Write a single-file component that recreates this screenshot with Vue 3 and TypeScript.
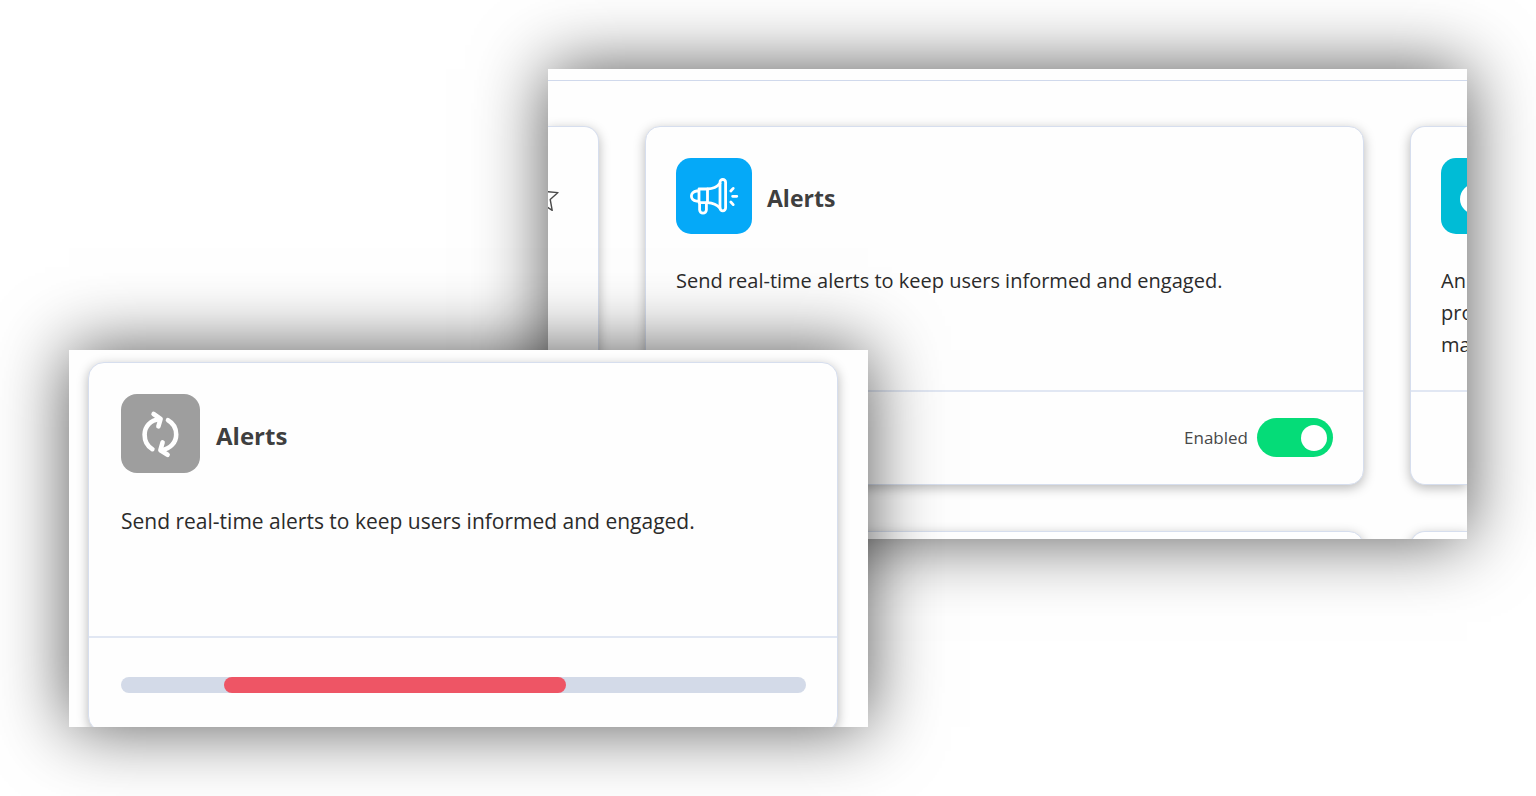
<script setup lang="ts">
import { ref } from 'vue'

interface Progress {
  start: number
  length: number
}

const enabled = ref(true)
const progress: Progress = { start: 15, length: 50 }
const description = 'Send real-time alerts to keep users informed and engaged.'
const neighbourLines: string[] = ['An', 'pro', 'ma']
</script>

<template>
  <main class="stage">
    <section class="panel panel-back" aria-label="Modules">
      <div class="rule"></div>
      <div class="row">
        <article class="card cut-left">
          <div class="body">
            <svg class="star" viewBox="0 0 11 24" fill="none" stroke="#4a4a4a" stroke-width="1.4" stroke-linejoin="round">
              <path d="M-8 3.5 L-3 3.5 L0 3.8 L10 4.6 L2.2 11.5 L4.2 22.4 L-4 17" />
            </svg>
          </div>
          <div class="foot"></div>
        </article>

        <article class="card">
          <div class="body">
            <header class="head">
              <span class="tile blue">
                <svg viewBox="0 0 76 76" fill="none" stroke="#fff" stroke-width="2.8" stroke-linecap="round" stroke-linejoin="round">
                  <path d="M22.6 33 H20.6 C17.4 33.4 15.4 35.6 15.4 38 C15.4 40.4 17.4 42.6 20.6 43.2 H22.6" />
                  <path d="M23 31 H31.5 V44.6 H23 Z" />
                  <path d="M31.5 31 C37 30.8 41 29 44 25.4 M31.5 44.6 C37 44.8 41 46.6 44 50.2" />
                  <rect x="44" y="21.5" width="5.6" height="31.4" rx="2.8" />
                  <path d="M23.6 45 V51.8 A3.4 3.4 0 0 0 30.4 51.8 V45" />
                  <path d="M54.8 33 L57.2 30.4 M56.6 38.3 H60.8 M54.8 44 L57.2 46.6" />
                </svg>
              </span>
              <h2 class="title">Alerts</h2>
            </header>
            <p class="text">{{ description }}</p>
          </div>
          <div class="foot foot-end">
            <label class="switch-label" for="alerts-enabled">Enabled</label>
            <input id="alerts-enabled" v-model="enabled" class="switch" type="checkbox" role="switch" />
          </div>
        </article>

        <article class="card cut-right">
          <div class="body">
            <header class="head">
              <span class="tile cyan"><span class="dot"></span></span>
            </header>
            <p class="text">
              <span v-for="line in neighbourLines" :key="line" class="line">{{ line }}</span>
            </p>
          </div>
          <div class="foot"></div>
        </article>

        <article class="card cut-left"></article>
        <article class="card"></article>
        <article class="card cut-right"></article>
      </div>
    </section>

    <section class="panel panel-front" aria-label="Alerts module">
      <article class="card large">
        <div class="body">
          <header class="head">
            <span class="tile gray">
              <svg viewBox="0 0 79 79" fill="none" stroke="#fff" stroke-width="4.6" stroke-linecap="round" stroke-linejoin="round">
                <path d="M31.4 55.2 C26.4 52.4 23.6 46.6 23.6 40.6 C23.6 32.6 29.4 26 38.4 25.2" />
                <path d="M32.6 20 L39.6 24.8 L37.4 32.4" />
                <path d="M47 26.2 C52 29 55.2 34.4 55.2 40.4 C55.2 48.4 49.4 54.8 40.6 56" />
                <path d="M41.6 48.4 L39.4 56.2 L46.6 60.8" />
              </svg>
            </span>
            <h2 class="title">Alerts</h2>
          </header>
          <p class="text">{{ description }}</p>
        </div>
        <div class="foot">
          <div class="track" role="progressbar" aria-label="Alerts progress">
            <div class="bar" :style="{ marginLeft: progress.start + '%', width: progress.length + '%' }"></div>
          </div>
        </div>
      </article>
    </section>
  </main>
</template>

<style>
body {
  margin: 0;
  background: #fff;
}
</style>

<style scoped>
.stage {
  display: grid;
  grid-template-columns: 479fr 320fr 599fr;
  grid-template-rows: 281px 189px 188px;
  padding: 69px;
  overflow: hidden;
  font-family: 'Segoe UI', 'Open Sans', 'Noto Sans', sans-serif;
  color: #2b2b2b;
}

.panel {
  overflow: hidden;
  min-width: 0;
  background: #fefefe;
  box-shadow: 0 0 68px rgba(0, 0, 0, 0.66);
}

.panel-back {
  grid-column: 2 / 4;
  grid-row: 1 / 3;
}

.panel-front {
  grid-column: 1 / 3;
  grid-row: 2 / 4;
  padding: 12px 30px 0 19px;
}

.rule {
  height: 11px;
  border-bottom: 1px solid #d0d9ec;
}

.row {
  display: grid;
  grid-template-columns: 51px minmax(0, 1fr) 57px;
  grid-template-rows: 359px 359px;
  gap: 46px;
  padding-top: 45px;
}

.card {
  display: flex;
  flex-direction: column;
  box-sizing: border-box;
  min-width: 0;
  border: 1px solid #d6deee;
  border-radius: 15px;
  background: #fefefe;
  box-shadow: 0 3px 12px rgba(0, 0, 0, 0.28);
}

.cut-left {
  border-left: 0;
  border-radius: 0 15px 15px 0;
}

.cut-right {
  border-right: 0;
  border-radius: 15px 0 0 15px;
}

.body {
  box-sizing: border-box;
  flex: 0 0 263px;
  padding: 31px 30px 0;
}

.cut-left .body {
  padding-left: 0;
}

.cut-right .body {
  padding-right: 0;
}

.head {
  display: flex;
  align-items: center;
  gap: 15px;
}

.tile {
  display: flex;
  align-items: center;
  flex: none;
  overflow: hidden;
  width: 76px;
  height: 76px;
  border-radius: 15px;
}

.tile svg {
  width: 100%;
  height: 100%;
}

.blue {
  background: #05a9f8;
}

.cyan {
  background: #00bcd6;
}

.gray {
  background: #9e9e9e;
}

.dot {
  width: 38px;
  height: 30px;
  margin: 6px 0 0 19px;
  border-radius: 15px;
  background: #fff;
}

.star {
  display: block;
  width: 11px;
  height: 24px;
  margin-top: 30px;
}

.title {
  margin: 0;
  padding-top: 4px;
  font-size: 23px;
  line-height: 32px;
  font-weight: 700;
  color: #3f3f3f;
}

.text {
  margin: 31px 0 0;
  font-size: 20px;
  line-height: 32px;
  white-space: nowrap;
}

.line {
  display: block;
}

.foot {
  display: flex;
  align-items: center;
  flex: 1;
  padding: 0 30px;
  border-top: 2px solid #e1e7f3;
}

.foot-end {
  justify-content: flex-end;
  gap: 9px;
  padding-bottom: 1px;
}

.switch-label {
  font-size: 17px;
  line-height: 24px;
  color: #484848;
}

.switch {
  display: flex;
  align-items: center;
  appearance: none;
  box-sizing: border-box;
  width: 76px;
  height: 39px;
  margin: 0;
  padding: 0 6px;
  border-radius: 20px;
  background: #b8bfca;
  cursor: pointer;
}

.switch::before {
  content: '';
  width: 26px;
  height: 26px;
  border-radius: 50%;
  background: #fff;
}

.switch:checked {
  justify-content: flex-end;
  background: #05dc78;
}

.large {
  height: 370px;
  border-radius: 16px;
}

.large .body {
  flex-basis: 273px;
  padding: 31px 31px 0 32px;
}

.large .head {
  gap: 16px;
}

.large .tile {
  width: 79px;
  height: 79px;
  border-radius: 16px;
}

.large .title {
  font-size: 24px;
}

.large .text {
  margin-top: 32px;
  font-size: 21px;
}

.large .foot {
  padding: 0 31px 0 32px;
}

.track {
  flex: 1;
  height: 16px;
  border-radius: 8px;
  background: #d3dae8;
}

.bar {
  height: 16px;
  border-radius: 8px;
  background: #ee5565;
}
</style>
